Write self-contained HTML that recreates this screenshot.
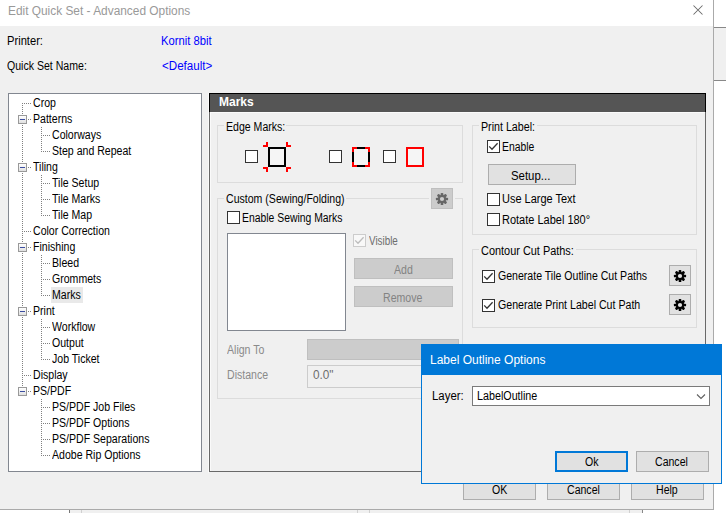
<!DOCTYPE html>
<html><head><meta charset="utf-8">
<style>
html,body{margin:0;padding:0;width:726px;height:513px;overflow:hidden;background:#fff;position:relative}
*{box-sizing:border-box}
div,svg{position:absolute}
.t{font-family:"Liberation Sans",sans-serif;font-size:12px;line-height:16px;height:16px;white-space:nowrap;color:#000;transform-origin:0 0}
</style></head><body>
<div style="left:0px;top:0px;width:714px;height:510px;background:#f0f0f0;border-right:1px solid #aaa;border-bottom:1px solid #aaa"></div>
<div style="left:0px;top:0px;width:713px;height:26px;background:#fff"></div>
<div class="t" style="left:8px;top:3px;color:#999;transform:scaleX(0.99);">Edit Quick Set - Advanced Options</div>
<svg style="left:693px;top:5px" width="11" height="11"><path d="M0.5 0.5L9.5 9.5M9.5 0.5L0.5 9.5" stroke="#6a6a6a" stroke-width="1.05"/></svg>
<div style="left:714px;top:27px;width:12px;height:54px;background:#f0f0f0;border-top:1px solid #888;border-bottom:1px solid #888"></div>
<div style="left:69px;top:510px;width:1px;height:3px;background:#777"></div>
<div style="left:70px;top:510px;width:572px;height:3px;background:#f0f0f0"></div>
<div style="left:81px;top:510px;width:1px;height:3px;background:#d0d0d0"></div>
<div style="left:357px;top:510px;width:1px;height:3px;background:#d0d0d0"></div>
<div style="left:369px;top:510px;width:1px;height:3px;background:#d0d0d0"></div>
<div style="left:629px;top:510px;width:1px;height:3px;background:#d0d0d0"></div>
<div style="left:642px;top:510px;width:1px;height:3px;background:#888"></div>
<div class="t" style="left:7px;top:33px;color:#000;transform:scaleX(0.93);">Printer:</div>
<div class="t" style="left:7px;top:58px;color:#000;transform:scaleX(0.88);">Quick Set Name:</div>
<div class="t" style="left:161px;top:33px;color:#00f;transform:scaleX(0.935);">Kornit 8bit</div>
<div class="t" style="left:162px;top:58px;color:#00f;transform:scaleX(0.965);">&lt;Default&gt;</div>
<div style="left:8px;top:93px;width:194px;height:379px;background:#fff;border:1px solid #828790"></div>
<div class="t" style="left:33px;top:95px;color:#000;transform:scaleX(0.88);">Crop</div>
<div class="t" style="left:33px;top:111px;color:#000;transform:scaleX(0.88);">Patterns</div>
<div class="t" style="left:52px;top:127px;color:#000;transform:scaleX(0.88);">Colorways</div>
<div class="t" style="left:52px;top:143px;color:#000;transform:scaleX(0.88);">Step and Repeat</div>
<div class="t" style="left:33px;top:159px;color:#000;transform:scaleX(0.88);">Tiling</div>
<div class="t" style="left:52px;top:175px;color:#000;transform:scaleX(0.88);">Tile Setup</div>
<div class="t" style="left:52px;top:191px;color:#000;transform:scaleX(0.88);">Tile Marks</div>
<div class="t" style="left:52px;top:207px;color:#000;transform:scaleX(0.88);">Tile Map</div>
<div class="t" style="left:33px;top:223px;color:#000;transform:scaleX(0.88);">Color Correction</div>
<div class="t" style="left:33px;top:239px;color:#000;transform:scaleX(0.88);">Finishing</div>
<div class="t" style="left:52px;top:255px;color:#000;transform:scaleX(0.88);">Bleed</div>
<div class="t" style="left:52px;top:271px;color:#000;transform:scaleX(0.88);">Grommets</div>
<div style="left:51px;top:287px;width:32px;height:16px;background:#e9e9e9"></div>
<div class="t" style="left:52px;top:287px;color:#000;transform:scaleX(0.88);">Marks</div>
<div class="t" style="left:33px;top:303px;color:#000;transform:scaleX(0.88);">Print</div>
<div class="t" style="left:52px;top:319px;color:#000;transform:scaleX(0.88);">Workflow</div>
<div class="t" style="left:52px;top:335px;color:#000;transform:scaleX(0.88);">Output</div>
<div class="t" style="left:52px;top:351px;color:#000;transform:scaleX(0.88);">Job Ticket</div>
<div class="t" style="left:33px;top:367px;color:#000;transform:scaleX(0.88);">Display</div>
<div class="t" style="left:33px;top:383px;color:#000;transform:scaleX(0.88);">PS/PDF</div>
<div class="t" style="left:52px;top:399px;color:#000;transform:scaleX(0.88);">PS/PDF Job Files</div>
<div class="t" style="left:52px;top:415px;color:#000;transform:scaleX(0.88);">PS/PDF Options</div>
<div class="t" style="left:52px;top:431px;color:#000;transform:scaleX(0.88);">PS/PDF Separations</div>
<div class="t" style="left:52px;top:447px;color:#000;transform:scaleX(0.88);">Adobe Rip Options</div>
<svg style="left:0;top:0" width="726" height="513"><rect x="22" y="103" width="1" height="1" fill="#808080"/><rect x="22" y="105" width="1" height="1" fill="#808080"/><rect x="22" y="107" width="1" height="1" fill="#808080"/><rect x="22" y="109" width="1" height="1" fill="#808080"/><rect x="22" y="111" width="1" height="1" fill="#808080"/><rect x="22" y="113" width="1" height="1" fill="#808080"/><rect x="22" y="115" width="1" height="1" fill="#808080"/><rect x="22" y="117" width="1" height="1" fill="#808080"/><rect x="22" y="119" width="1" height="1" fill="#808080"/><rect x="22" y="121" width="1" height="1" fill="#808080"/><rect x="22" y="123" width="1" height="1" fill="#808080"/><rect x="22" y="125" width="1" height="1" fill="#808080"/><rect x="22" y="127" width="1" height="1" fill="#808080"/><rect x="22" y="129" width="1" height="1" fill="#808080"/><rect x="22" y="131" width="1" height="1" fill="#808080"/><rect x="22" y="133" width="1" height="1" fill="#808080"/><rect x="22" y="135" width="1" height="1" fill="#808080"/><rect x="22" y="137" width="1" height="1" fill="#808080"/><rect x="22" y="139" width="1" height="1" fill="#808080"/><rect x="22" y="141" width="1" height="1" fill="#808080"/><rect x="22" y="143" width="1" height="1" fill="#808080"/><rect x="22" y="145" width="1" height="1" fill="#808080"/><rect x="22" y="147" width="1" height="1" fill="#808080"/><rect x="22" y="149" width="1" height="1" fill="#808080"/><rect x="22" y="151" width="1" height="1" fill="#808080"/><rect x="22" y="153" width="1" height="1" fill="#808080"/><rect x="22" y="155" width="1" height="1" fill="#808080"/><rect x="22" y="157" width="1" height="1" fill="#808080"/><rect x="22" y="159" width="1" height="1" fill="#808080"/><rect x="22" y="161" width="1" height="1" fill="#808080"/><rect x="22" y="163" width="1" height="1" fill="#808080"/><rect x="22" y="165" width="1" height="1" fill="#808080"/><rect x="22" y="167" width="1" height="1" fill="#808080"/><rect x="22" y="169" width="1" height="1" fill="#808080"/><rect x="22" y="171" width="1" height="1" fill="#808080"/><rect x="22" y="173" width="1" height="1" fill="#808080"/><rect x="22" y="175" width="1" height="1" fill="#808080"/><rect x="22" y="177" width="1" height="1" fill="#808080"/><rect x="22" y="179" width="1" height="1" fill="#808080"/><rect x="22" y="181" width="1" height="1" fill="#808080"/><rect x="22" y="183" width="1" height="1" fill="#808080"/><rect x="22" y="185" width="1" height="1" fill="#808080"/><rect x="22" y="187" width="1" height="1" fill="#808080"/><rect x="22" y="189" width="1" height="1" fill="#808080"/><rect x="22" y="191" width="1" height="1" fill="#808080"/><rect x="22" y="193" width="1" height="1" fill="#808080"/><rect x="22" y="195" width="1" height="1" fill="#808080"/><rect x="22" y="197" width="1" height="1" fill="#808080"/><rect x="22" y="199" width="1" height="1" fill="#808080"/><rect x="22" y="201" width="1" height="1" fill="#808080"/><rect x="22" y="203" width="1" height="1" fill="#808080"/><rect x="22" y="205" width="1" height="1" fill="#808080"/><rect x="22" y="207" width="1" height="1" fill="#808080"/><rect x="22" y="209" width="1" height="1" fill="#808080"/><rect x="22" y="211" width="1" height="1" fill="#808080"/><rect x="22" y="213" width="1" height="1" fill="#808080"/><rect x="22" y="215" width="1" height="1" fill="#808080"/><rect x="22" y="217" width="1" height="1" fill="#808080"/><rect x="22" y="219" width="1" height="1" fill="#808080"/><rect x="22" y="221" width="1" height="1" fill="#808080"/><rect x="22" y="223" width="1" height="1" fill="#808080"/><rect x="22" y="225" width="1" height="1" fill="#808080"/><rect x="22" y="227" width="1" height="1" fill="#808080"/><rect x="22" y="229" width="1" height="1" fill="#808080"/><rect x="22" y="231" width="1" height="1" fill="#808080"/><rect x="22" y="233" width="1" height="1" fill="#808080"/><rect x="22" y="235" width="1" height="1" fill="#808080"/><rect x="22" y="237" width="1" height="1" fill="#808080"/><rect x="22" y="239" width="1" height="1" fill="#808080"/><rect x="22" y="241" width="1" height="1" fill="#808080"/><rect x="22" y="243" width="1" height="1" fill="#808080"/><rect x="22" y="245" width="1" height="1" fill="#808080"/><rect x="22" y="247" width="1" height="1" fill="#808080"/><rect x="22" y="249" width="1" height="1" fill="#808080"/><rect x="22" y="251" width="1" height="1" fill="#808080"/><rect x="22" y="253" width="1" height="1" fill="#808080"/><rect x="22" y="255" width="1" height="1" fill="#808080"/><rect x="22" y="257" width="1" height="1" fill="#808080"/><rect x="22" y="259" width="1" height="1" fill="#808080"/><rect x="22" y="261" width="1" height="1" fill="#808080"/><rect x="22" y="263" width="1" height="1" fill="#808080"/><rect x="22" y="265" width="1" height="1" fill="#808080"/><rect x="22" y="267" width="1" height="1" fill="#808080"/><rect x="22" y="269" width="1" height="1" fill="#808080"/><rect x="22" y="271" width="1" height="1" fill="#808080"/><rect x="22" y="273" width="1" height="1" fill="#808080"/><rect x="22" y="275" width="1" height="1" fill="#808080"/><rect x="22" y="277" width="1" height="1" fill="#808080"/><rect x="22" y="279" width="1" height="1" fill="#808080"/><rect x="22" y="281" width="1" height="1" fill="#808080"/><rect x="22" y="283" width="1" height="1" fill="#808080"/><rect x="22" y="285" width="1" height="1" fill="#808080"/><rect x="22" y="287" width="1" height="1" fill="#808080"/><rect x="22" y="289" width="1" height="1" fill="#808080"/><rect x="22" y="291" width="1" height="1" fill="#808080"/><rect x="22" y="293" width="1" height="1" fill="#808080"/><rect x="22" y="295" width="1" height="1" fill="#808080"/><rect x="22" y="297" width="1" height="1" fill="#808080"/><rect x="22" y="299" width="1" height="1" fill="#808080"/><rect x="22" y="301" width="1" height="1" fill="#808080"/><rect x="22" y="303" width="1" height="1" fill="#808080"/><rect x="22" y="305" width="1" height="1" fill="#808080"/><rect x="22" y="307" width="1" height="1" fill="#808080"/><rect x="22" y="309" width="1" height="1" fill="#808080"/><rect x="22" y="311" width="1" height="1" fill="#808080"/><rect x="22" y="313" width="1" height="1" fill="#808080"/><rect x="22" y="315" width="1" height="1" fill="#808080"/><rect x="22" y="317" width="1" height="1" fill="#808080"/><rect x="22" y="319" width="1" height="1" fill="#808080"/><rect x="22" y="321" width="1" height="1" fill="#808080"/><rect x="22" y="323" width="1" height="1" fill="#808080"/><rect x="22" y="325" width="1" height="1" fill="#808080"/><rect x="22" y="327" width="1" height="1" fill="#808080"/><rect x="22" y="329" width="1" height="1" fill="#808080"/><rect x="22" y="331" width="1" height="1" fill="#808080"/><rect x="22" y="333" width="1" height="1" fill="#808080"/><rect x="22" y="335" width="1" height="1" fill="#808080"/><rect x="22" y="337" width="1" height="1" fill="#808080"/><rect x="22" y="339" width="1" height="1" fill="#808080"/><rect x="22" y="341" width="1" height="1" fill="#808080"/><rect x="22" y="343" width="1" height="1" fill="#808080"/><rect x="22" y="345" width="1" height="1" fill="#808080"/><rect x="22" y="347" width="1" height="1" fill="#808080"/><rect x="22" y="349" width="1" height="1" fill="#808080"/><rect x="22" y="351" width="1" height="1" fill="#808080"/><rect x="22" y="353" width="1" height="1" fill="#808080"/><rect x="22" y="355" width="1" height="1" fill="#808080"/><rect x="22" y="357" width="1" height="1" fill="#808080"/><rect x="22" y="359" width="1" height="1" fill="#808080"/><rect x="22" y="361" width="1" height="1" fill="#808080"/><rect x="22" y="363" width="1" height="1" fill="#808080"/><rect x="22" y="365" width="1" height="1" fill="#808080"/><rect x="22" y="367" width="1" height="1" fill="#808080"/><rect x="22" y="369" width="1" height="1" fill="#808080"/><rect x="22" y="371" width="1" height="1" fill="#808080"/><rect x="22" y="373" width="1" height="1" fill="#808080"/><rect x="22" y="375" width="1" height="1" fill="#808080"/><rect x="22" y="377" width="1" height="1" fill="#808080"/><rect x="22" y="379" width="1" height="1" fill="#808080"/><rect x="22" y="381" width="1" height="1" fill="#808080"/><rect x="22" y="383" width="1" height="1" fill="#808080"/><rect x="22" y="385" width="1" height="1" fill="#808080"/><rect x="22" y="387" width="1" height="1" fill="#808080"/><rect x="22" y="389" width="1" height="1" fill="#808080"/><rect x="22" y="391" width="1" height="1" fill="#808080"/><rect x="24" y="103" width="1" height="1" fill="#808080"/><rect x="26" y="103" width="1" height="1" fill="#808080"/><rect x="28" y="103" width="1" height="1" fill="#808080"/><rect x="30" y="103" width="1" height="1" fill="#808080"/><rect x="28" y="119" width="1" height="1" fill="#808080"/><rect x="30" y="119" width="1" height="1" fill="#808080"/><rect x="43" y="135" width="1" height="1" fill="#808080"/><rect x="45" y="135" width="1" height="1" fill="#808080"/><rect x="47" y="135" width="1" height="1" fill="#808080"/><rect x="49" y="135" width="1" height="1" fill="#808080"/><rect x="43" y="151" width="1" height="1" fill="#808080"/><rect x="45" y="151" width="1" height="1" fill="#808080"/><rect x="47" y="151" width="1" height="1" fill="#808080"/><rect x="49" y="151" width="1" height="1" fill="#808080"/><rect x="41" y="127" width="1" height="1" fill="#808080"/><rect x="41" y="129" width="1" height="1" fill="#808080"/><rect x="41" y="131" width="1" height="1" fill="#808080"/><rect x="41" y="133" width="1" height="1" fill="#808080"/><rect x="41" y="135" width="1" height="1" fill="#808080"/><rect x="41" y="137" width="1" height="1" fill="#808080"/><rect x="41" y="139" width="1" height="1" fill="#808080"/><rect x="41" y="141" width="1" height="1" fill="#808080"/><rect x="41" y="143" width="1" height="1" fill="#808080"/><rect x="41" y="145" width="1" height="1" fill="#808080"/><rect x="41" y="147" width="1" height="1" fill="#808080"/><rect x="41" y="149" width="1" height="1" fill="#808080"/><rect x="41" y="151" width="1" height="1" fill="#808080"/><rect x="28" y="167" width="1" height="1" fill="#808080"/><rect x="30" y="167" width="1" height="1" fill="#808080"/><rect x="43" y="183" width="1" height="1" fill="#808080"/><rect x="45" y="183" width="1" height="1" fill="#808080"/><rect x="47" y="183" width="1" height="1" fill="#808080"/><rect x="49" y="183" width="1" height="1" fill="#808080"/><rect x="43" y="199" width="1" height="1" fill="#808080"/><rect x="45" y="199" width="1" height="1" fill="#808080"/><rect x="47" y="199" width="1" height="1" fill="#808080"/><rect x="49" y="199" width="1" height="1" fill="#808080"/><rect x="43" y="215" width="1" height="1" fill="#808080"/><rect x="45" y="215" width="1" height="1" fill="#808080"/><rect x="47" y="215" width="1" height="1" fill="#808080"/><rect x="49" y="215" width="1" height="1" fill="#808080"/><rect x="41" y="175" width="1" height="1" fill="#808080"/><rect x="41" y="177" width="1" height="1" fill="#808080"/><rect x="41" y="179" width="1" height="1" fill="#808080"/><rect x="41" y="181" width="1" height="1" fill="#808080"/><rect x="41" y="183" width="1" height="1" fill="#808080"/><rect x="41" y="185" width="1" height="1" fill="#808080"/><rect x="41" y="187" width="1" height="1" fill="#808080"/><rect x="41" y="189" width="1" height="1" fill="#808080"/><rect x="41" y="191" width="1" height="1" fill="#808080"/><rect x="41" y="193" width="1" height="1" fill="#808080"/><rect x="41" y="195" width="1" height="1" fill="#808080"/><rect x="41" y="197" width="1" height="1" fill="#808080"/><rect x="41" y="199" width="1" height="1" fill="#808080"/><rect x="41" y="201" width="1" height="1" fill="#808080"/><rect x="41" y="203" width="1" height="1" fill="#808080"/><rect x="41" y="205" width="1" height="1" fill="#808080"/><rect x="41" y="207" width="1" height="1" fill="#808080"/><rect x="41" y="209" width="1" height="1" fill="#808080"/><rect x="41" y="211" width="1" height="1" fill="#808080"/><rect x="41" y="213" width="1" height="1" fill="#808080"/><rect x="41" y="215" width="1" height="1" fill="#808080"/><rect x="24" y="231" width="1" height="1" fill="#808080"/><rect x="26" y="231" width="1" height="1" fill="#808080"/><rect x="28" y="231" width="1" height="1" fill="#808080"/><rect x="30" y="231" width="1" height="1" fill="#808080"/><rect x="28" y="247" width="1" height="1" fill="#808080"/><rect x="30" y="247" width="1" height="1" fill="#808080"/><rect x="43" y="263" width="1" height="1" fill="#808080"/><rect x="45" y="263" width="1" height="1" fill="#808080"/><rect x="47" y="263" width="1" height="1" fill="#808080"/><rect x="49" y="263" width="1" height="1" fill="#808080"/><rect x="43" y="279" width="1" height="1" fill="#808080"/><rect x="45" y="279" width="1" height="1" fill="#808080"/><rect x="47" y="279" width="1" height="1" fill="#808080"/><rect x="49" y="279" width="1" height="1" fill="#808080"/><rect x="43" y="295" width="1" height="1" fill="#808080"/><rect x="45" y="295" width="1" height="1" fill="#808080"/><rect x="47" y="295" width="1" height="1" fill="#808080"/><rect x="49" y="295" width="1" height="1" fill="#808080"/><rect x="41" y="255" width="1" height="1" fill="#808080"/><rect x="41" y="257" width="1" height="1" fill="#808080"/><rect x="41" y="259" width="1" height="1" fill="#808080"/><rect x="41" y="261" width="1" height="1" fill="#808080"/><rect x="41" y="263" width="1" height="1" fill="#808080"/><rect x="41" y="265" width="1" height="1" fill="#808080"/><rect x="41" y="267" width="1" height="1" fill="#808080"/><rect x="41" y="269" width="1" height="1" fill="#808080"/><rect x="41" y="271" width="1" height="1" fill="#808080"/><rect x="41" y="273" width="1" height="1" fill="#808080"/><rect x="41" y="275" width="1" height="1" fill="#808080"/><rect x="41" y="277" width="1" height="1" fill="#808080"/><rect x="41" y="279" width="1" height="1" fill="#808080"/><rect x="41" y="281" width="1" height="1" fill="#808080"/><rect x="41" y="283" width="1" height="1" fill="#808080"/><rect x="41" y="285" width="1" height="1" fill="#808080"/><rect x="41" y="287" width="1" height="1" fill="#808080"/><rect x="41" y="289" width="1" height="1" fill="#808080"/><rect x="41" y="291" width="1" height="1" fill="#808080"/><rect x="41" y="293" width="1" height="1" fill="#808080"/><rect x="41" y="295" width="1" height="1" fill="#808080"/><rect x="28" y="311" width="1" height="1" fill="#808080"/><rect x="30" y="311" width="1" height="1" fill="#808080"/><rect x="43" y="327" width="1" height="1" fill="#808080"/><rect x="45" y="327" width="1" height="1" fill="#808080"/><rect x="47" y="327" width="1" height="1" fill="#808080"/><rect x="49" y="327" width="1" height="1" fill="#808080"/><rect x="43" y="343" width="1" height="1" fill="#808080"/><rect x="45" y="343" width="1" height="1" fill="#808080"/><rect x="47" y="343" width="1" height="1" fill="#808080"/><rect x="49" y="343" width="1" height="1" fill="#808080"/><rect x="43" y="359" width="1" height="1" fill="#808080"/><rect x="45" y="359" width="1" height="1" fill="#808080"/><rect x="47" y="359" width="1" height="1" fill="#808080"/><rect x="49" y="359" width="1" height="1" fill="#808080"/><rect x="41" y="319" width="1" height="1" fill="#808080"/><rect x="41" y="321" width="1" height="1" fill="#808080"/><rect x="41" y="323" width="1" height="1" fill="#808080"/><rect x="41" y="325" width="1" height="1" fill="#808080"/><rect x="41" y="327" width="1" height="1" fill="#808080"/><rect x="41" y="329" width="1" height="1" fill="#808080"/><rect x="41" y="331" width="1" height="1" fill="#808080"/><rect x="41" y="333" width="1" height="1" fill="#808080"/><rect x="41" y="335" width="1" height="1" fill="#808080"/><rect x="41" y="337" width="1" height="1" fill="#808080"/><rect x="41" y="339" width="1" height="1" fill="#808080"/><rect x="41" y="341" width="1" height="1" fill="#808080"/><rect x="41" y="343" width="1" height="1" fill="#808080"/><rect x="41" y="345" width="1" height="1" fill="#808080"/><rect x="41" y="347" width="1" height="1" fill="#808080"/><rect x="41" y="349" width="1" height="1" fill="#808080"/><rect x="41" y="351" width="1" height="1" fill="#808080"/><rect x="41" y="353" width="1" height="1" fill="#808080"/><rect x="41" y="355" width="1" height="1" fill="#808080"/><rect x="41" y="357" width="1" height="1" fill="#808080"/><rect x="41" y="359" width="1" height="1" fill="#808080"/><rect x="24" y="375" width="1" height="1" fill="#808080"/><rect x="26" y="375" width="1" height="1" fill="#808080"/><rect x="28" y="375" width="1" height="1" fill="#808080"/><rect x="30" y="375" width="1" height="1" fill="#808080"/><rect x="28" y="391" width="1" height="1" fill="#808080"/><rect x="30" y="391" width="1" height="1" fill="#808080"/><rect x="43" y="407" width="1" height="1" fill="#808080"/><rect x="45" y="407" width="1" height="1" fill="#808080"/><rect x="47" y="407" width="1" height="1" fill="#808080"/><rect x="49" y="407" width="1" height="1" fill="#808080"/><rect x="43" y="423" width="1" height="1" fill="#808080"/><rect x="45" y="423" width="1" height="1" fill="#808080"/><rect x="47" y="423" width="1" height="1" fill="#808080"/><rect x="49" y="423" width="1" height="1" fill="#808080"/><rect x="43" y="439" width="1" height="1" fill="#808080"/><rect x="45" y="439" width="1" height="1" fill="#808080"/><rect x="47" y="439" width="1" height="1" fill="#808080"/><rect x="49" y="439" width="1" height="1" fill="#808080"/><rect x="43" y="455" width="1" height="1" fill="#808080"/><rect x="45" y="455" width="1" height="1" fill="#808080"/><rect x="47" y="455" width="1" height="1" fill="#808080"/><rect x="49" y="455" width="1" height="1" fill="#808080"/><rect x="41" y="399" width="1" height="1" fill="#808080"/><rect x="41" y="401" width="1" height="1" fill="#808080"/><rect x="41" y="403" width="1" height="1" fill="#808080"/><rect x="41" y="405" width="1" height="1" fill="#808080"/><rect x="41" y="407" width="1" height="1" fill="#808080"/><rect x="41" y="409" width="1" height="1" fill="#808080"/><rect x="41" y="411" width="1" height="1" fill="#808080"/><rect x="41" y="413" width="1" height="1" fill="#808080"/><rect x="41" y="415" width="1" height="1" fill="#808080"/><rect x="41" y="417" width="1" height="1" fill="#808080"/><rect x="41" y="419" width="1" height="1" fill="#808080"/><rect x="41" y="421" width="1" height="1" fill="#808080"/><rect x="41" y="423" width="1" height="1" fill="#808080"/><rect x="41" y="425" width="1" height="1" fill="#808080"/><rect x="41" y="427" width="1" height="1" fill="#808080"/><rect x="41" y="429" width="1" height="1" fill="#808080"/><rect x="41" y="431" width="1" height="1" fill="#808080"/><rect x="41" y="433" width="1" height="1" fill="#808080"/><rect x="41" y="435" width="1" height="1" fill="#808080"/><rect x="41" y="437" width="1" height="1" fill="#808080"/><rect x="41" y="439" width="1" height="1" fill="#808080"/><rect x="41" y="441" width="1" height="1" fill="#808080"/><rect x="41" y="443" width="1" height="1" fill="#808080"/><rect x="41" y="445" width="1" height="1" fill="#808080"/><rect x="41" y="447" width="1" height="1" fill="#808080"/><rect x="41" y="449" width="1" height="1" fill="#808080"/><rect x="41" y="451" width="1" height="1" fill="#808080"/><rect x="41" y="453" width="1" height="1" fill="#808080"/><rect x="41" y="455" width="1" height="1" fill="#808080"/></svg>
<div style="left:18px;top:115px;width:9px;height:9px;background:linear-gradient(#fff,#e0e0e0);border:1px solid #999"></div>
<div style="left:20px;top:119px;width:5px;height:1px;background:#3c4ea0"></div>
<div style="left:18px;top:163px;width:9px;height:9px;background:linear-gradient(#fff,#e0e0e0);border:1px solid #999"></div>
<div style="left:20px;top:167px;width:5px;height:1px;background:#3c4ea0"></div>
<div style="left:18px;top:243px;width:9px;height:9px;background:linear-gradient(#fff,#e0e0e0);border:1px solid #999"></div>
<div style="left:20px;top:247px;width:5px;height:1px;background:#3c4ea0"></div>
<div style="left:18px;top:307px;width:9px;height:9px;background:linear-gradient(#fff,#e0e0e0);border:1px solid #999"></div>
<div style="left:20px;top:311px;width:5px;height:1px;background:#3c4ea0"></div>
<div style="left:18px;top:387px;width:9px;height:9px;background:linear-gradient(#fff,#e0e0e0);border:1px solid #999"></div>
<div style="left:20px;top:391px;width:5px;height:1px;background:#3c4ea0"></div>
<div style="left:209px;top:93px;width:497px;height:379px;border:1px solid #696969;border-top-color:#000"></div>
<div style="left:209px;top:93px;width:497px;height:19px;background:#555;border:1px solid #000;border-bottom:none"></div>
<div class="t" style="left:219px;top:94px;color:#fff;transform:scaleX(1);font-weight:bold">Marks</div>
<div style="left:210px;top:112px;width:495px;height:1px;background:#fafafa"></div>
<div style="left:210px;top:112px;width:1px;height:359px;background:#fafafa"></div>
<div style="left:208px;top:93px;width:1px;height:380px;background:#fafafa"></div>
<div style="left:217px;top:125px;width:246px;height:58px;border:1px solid #dcdcdc"></div>
<div style="left:224px;top:123px;width:62px;height:4px;background:#f0f0f0"></div>
<div class="t" style="left:226px;top:119px;color:#000;transform:scaleX(0.88);">Edge Marks:</div>
<div style="left:245px;top:150px;width:13px;height:13px;background:#fff;border:1px solid #333"></div>
<div style="left:268px;top:147px;width:18px;height:20px;background:#f5f5f5;border:2px solid #000"></div>
<svg style="left:260px;top:140px" width="34" height="34"><g fill="#f00"><rect x="3" y="5" width="5" height="2"/><rect x="6" y="2" width="2" height="5"/><rect x="26" y="5" width="5" height="2"/><rect x="26" y="2" width="2" height="5"/><rect x="3" y="27" width="5" height="2"/><rect x="6" y="27" width="2" height="5"/><rect x="26" y="27" width="5" height="2"/><rect x="26" y="27" width="2" height="5"/></g></svg>
<div style="left:329px;top:150px;width:13px;height:13px;background:#fff;border:1px solid #333"></div>
<div style="left:352px;top:147px;width:18px;height:20px;background:#f5f5f5;border:2px solid #f00"></div>
<svg style="left:352px;top:147px" width="18" height="20"><g fill="#000"><rect x="5" y="0" width="8" height="2"/><rect x="5" y="18" width="8" height="2"/><rect x="0" y="5" width="2" height="10"/><rect x="16" y="5" width="2" height="10"/></g></svg>
<div style="left:383px;top:150px;width:13px;height:13px;background:#fff;border:1px solid #333"></div>
<div style="left:406px;top:147px;width:18px;height:20px;background:#f5f5f5;border:2px solid #f00"></div>
<div style="left:217px;top:198px;width:246px;height:201px;border:1px solid #dcdcdc"></div>
<div style="left:224px;top:196px;width:122px;height:4px;background:#f0f0f0"></div>
<div class="t" style="left:226px;top:191px;color:#000;transform:scaleX(0.88);">Custom (Sewing/Folding)</div>
<div style="left:429px;top:196px;width:26px;height:4px;background:#f0f0f0"></div>
<div style="left:431px;top:188px;width:22px;height:21px;background:#cccccc;border:1px solid #bfbfbf"></div>
<svg style="left:433px;top:189.5px" width="18" height="18"><g fill="#666" transform="translate(9,9)"><rect x="-1.35" y="-6.1" width="2.7" height="12.2" rx="0.9" transform="rotate(0)"/><rect x="-1.35" y="-6.1" width="2.7" height="12.2" rx="0.9" transform="rotate(45)"/><rect x="-1.35" y="-6.1" width="2.7" height="12.2" rx="0.9" transform="rotate(90)"/><rect x="-1.35" y="-6.1" width="2.7" height="12.2" rx="0.9" transform="rotate(135)"/><circle r="4.1"/><circle r="2.1" fill="#cccccc"/></g></svg>
<div style="left:227px;top:211px;width:13px;height:13px;background:#fff;border:1px solid #333"></div>
<div class="t" style="left:242px;top:210px;color:#000;transform:scaleX(0.865);">Enable Sewing Marks</div>
<div style="left:227px;top:233px;width:119px;height:98px;background:#fff;border:1px solid #828790"></div>
<div style="left:353px;top:234px;width:13px;height:13px;background:#f8f8f8;border:1px solid #cccccc"></div>
<svg style="left:353px;top:234px" width="13" height="13"><path d="M2.2 6.4L5 9.2L10.6 3.3" fill="none" stroke="#bcbcbc" stroke-width="1.3"/></svg>
<div class="t" style="left:369px;top:233px;color:#6d6d6d;transform:scaleX(0.82);">Visible</div>
<div style="left:354px;top:258px;width:99px;height:21px;background:#cccccc;border:1px solid #bfbfbf"></div>
<div class="t" style="left:394px;top:262px;color:#838383;transform:scaleX(0.88);">Add</div>
<div style="left:354px;top:286px;width:99px;height:21px;background:#cccccc;border:1px solid #bfbfbf"></div>
<div class="t" style="left:383px;top:290px;color:#838383;transform:scaleX(0.88);">Remove</div>
<div class="t" style="left:227px;top:342px;color:#8a8a8a;transform:scaleX(0.88);">Align To</div>
<div style="left:307px;top:339px;width:152px;height:21px;background:#cccccc;border:1px solid #bfbfbf"></div>
<div class="t" style="left:227px;top:367px;color:#8a8a8a;transform:scaleX(0.88);">Distance</div>
<div style="left:307px;top:365px;width:152px;height:23px;background:#f0f0f0;border:1px solid #cccccc"></div>
<div class="t" style="left:313px;top:367px;color:#6d6d6d;transform:scaleX(0.98);">0.0"</div>
<div style="left:472px;top:125px;width:225px;height:110px;border:1px solid #dcdcdc"></div>
<div style="left:479px;top:123px;width:58px;height:4px;background:#f0f0f0"></div>
<div class="t" style="left:481px;top:119px;color:#000;transform:scaleX(0.89);">Print Label:</div>
<div style="left:487px;top:140px;width:13px;height:13px;background:#fff;border:1px solid #333"></div>
<svg style="left:487px;top:140px" width="13" height="13"><path d="M2.2 6.4L5 9.2L10.6 3.3" fill="none" stroke="#333" stroke-width="1.3"/></svg>
<div class="t" style="left:502px;top:139px;color:#000;transform:scaleX(0.865);">Enable</div>
<div style="left:488px;top:164px;width:88px;height:21px;background:#e1e1e1;border:1px solid #adadad"></div>
<div class="t" style="left:511px;top:168px;color:#000;transform:scaleX(0.95);">Setup...</div>
<div style="left:487px;top:193px;width:13px;height:13px;background:#fff;border:1px solid #333"></div>
<div class="t" style="left:502px;top:191px;color:#000;transform:scaleX(0.914);">Use Large Text</div>
<div style="left:487px;top:213px;width:13px;height:13px;background:#fff;border:1px solid #333"></div>
<div class="t" style="left:502px;top:212px;color:#000;transform:scaleX(0.916);">Rotate Label 180°</div>
<div style="left:472px;top:249px;width:225px;height:79px;border:1px solid #dcdcdc"></div>
<div style="left:479px;top:247px;width:97px;height:4px;background:#f0f0f0"></div>
<div class="t" style="left:481px;top:243px;color:#000;transform:scaleX(0.91);">Contour Cut Paths:</div>
<div style="left:482px;top:270px;width:13px;height:13px;background:#fff;border:1px solid #333"></div>
<svg style="left:482px;top:270px" width="13" height="13"><path d="M2.2 6.4L5 9.2L10.6 3.3" fill="none" stroke="#333" stroke-width="1.3"/></svg>
<div class="t" style="left:498px;top:268px;color:#000;transform:scaleX(0.88);">Generate Tile Outline Cut Paths</div>
<div style="left:669px;top:265px;width:22px;height:21px;background:#e1e1e1;border:1px solid #adadad"></div>
<svg style="left:671px;top:267px" width="18" height="18"><g fill="#000" transform="translate(9,9)"><rect x="-1.35" y="-6.1" width="2.7" height="12.2" rx="0.9" transform="rotate(0)"/><rect x="-1.35" y="-6.1" width="2.7" height="12.2" rx="0.9" transform="rotate(45)"/><rect x="-1.35" y="-6.1" width="2.7" height="12.2" rx="0.9" transform="rotate(90)"/><rect x="-1.35" y="-6.1" width="2.7" height="12.2" rx="0.9" transform="rotate(135)"/><circle r="4.1"/><circle r="2.1" fill="#e1e1e1"/></g></svg>
<div style="left:482px;top:299px;width:13px;height:13px;background:#fff;border:1px solid #333"></div>
<svg style="left:482px;top:299px" width="13" height="13"><path d="M2.2 6.4L5 9.2L10.6 3.3" fill="none" stroke="#333" stroke-width="1.3"/></svg>
<div class="t" style="left:498px;top:297px;color:#000;transform:scaleX(0.885);">Generate Print Label Cut Path</div>
<div style="left:669px;top:294px;width:22px;height:21px;background:#e1e1e1;border:1px solid #adadad"></div>
<svg style="left:671px;top:296px" width="18" height="18"><g fill="#000" transform="translate(9,9)"><rect x="-1.35" y="-6.1" width="2.7" height="12.2" rx="0.9" transform="rotate(0)"/><rect x="-1.35" y="-6.1" width="2.7" height="12.2" rx="0.9" transform="rotate(45)"/><rect x="-1.35" y="-6.1" width="2.7" height="12.2" rx="0.9" transform="rotate(90)"/><rect x="-1.35" y="-6.1" width="2.7" height="12.2" rx="0.9" transform="rotate(135)"/><circle r="4.1"/><circle r="2.1" fill="#e1e1e1"/></g></svg>
<div style="left:463px;top:476px;width:73px;height:24px;background:#e1e1e1;border:1px solid #adadad"></div>
<div class="t" style="left:492px;top:482px;color:#000;transform:scaleX(0.88);">OK</div>
<div style="left:547px;top:476px;width:73px;height:24px;background:#e1e1e1;border:1px solid #adadad"></div>
<div class="t" style="left:567px;top:482px;color:#000;transform:scaleX(0.88);">Cancel</div>
<div style="left:631px;top:476px;width:73px;height:24px;background:#e1e1e1;border:1px solid #adadad"></div>
<div class="t" style="left:656px;top:482px;color:#000;transform:scaleX(0.88);">Help</div>
<div style="left:421px;top:344px;width:301px;height:140px;background:#f0f0f0;border:1px solid #0078d7"></div>
<div style="left:421px;top:344px;width:301px;height:31px;background:#0078d7"></div>
<div class="t" style="left:430px;top:352px;color:#fff;transform:scaleX(1.0);">Label Outline Options</div>
<div class="t" style="left:432px;top:388px;color:#000;transform:scaleX(0.95);">Layer:</div>
<div style="left:472px;top:386px;width:238px;height:20px;background:#fff;border:1px solid #7a7a7a"></div>
<div class="t" style="left:477px;top:388px;color:#000;transform:scaleX(0.895);">LabelOutline</div>
<svg style="left:696px;top:393px" width="11" height="8"><path d="M1 1.5L5 5.5L9 1.5" fill="none" stroke="#606060" stroke-width="1.1"/></svg>
<div style="left:555px;top:451px;width:73px;height:21px;background:#e1e1e1;border:2px solid #0078d7"></div>
<div class="t" style="left:585px;top:454px;color:#000;transform:scaleX(0.88);">Ok</div>
<div style="left:636px;top:451px;width:73px;height:21px;background:#e1e1e1;border:1px solid #adadad"></div>
<div class="t" style="left:655px;top:454px;color:#000;transform:scaleX(0.88);">Cancel</div>
</body></html>
